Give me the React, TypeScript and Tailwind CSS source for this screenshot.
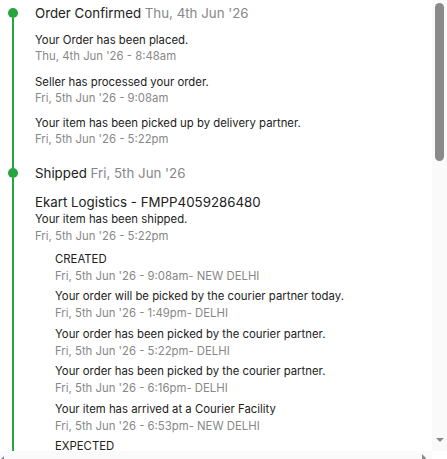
import React from "react";

type Update = { text: string; time: string };

interface Section {
    title: string;
    date: string;
    courier?: string;
    updates: Update[];
    tracking?: Update[];
}

const sections: Section[] = [
    {
        title: "Order Confirmed",
        date: "Thu, 4th Jun '26",
        updates: [
            { text: "Your Order has been placed.", time: "Thu, 4th Jun '26 - 8:48am" },
            { text: "Seller has processed your order.", time: "Fri, 5th Jun '26 - 9:08am" },
            { text: "Your item has been picked up by delivery partner.", time: "Fri, 5th Jun '26 - 5:22pm" },
        ],
    },
    {
        title: "Shipped",
        date: "Fri, 5th Jun '26",
        courier: "Ekart Logistics - FMPP4059286480",
        updates: [{ text: "Your item has been shipped.", time: "Fri, 5th Jun '26 - 5:22pm" }],
        tracking: [
            { text: "CREATED", time: "Fri, 5th Jun '26 - 9:08am- NEW DELHI" },
            { text: "Your order will be picked by the courier partner today.", time: "Fri, 5th Jun '26 - 1:49pm- DELHI" },
            { text: "Your order has been picked by the courier partner.", time: "Fri, 5th Jun '26 - 5:22pm- DELHI" },
            { text: "Your order has been picked by the courier partner.", time: "Fri, 5th Jun '26 - 6:16pm- DELHI" },
            { text: "Your item has arrived at a Courier Facility", time: "Fri, 5th Jun '26 - 6:53pm- NEW DELHI" },
            { text: "EXPECTED", time: "Fri, 5th Jun '26 - 7:10pm- NEW DELHI" },
        ],
    },
];

// chrome-like scrollbar, drawn since the headless shot hides the real one
function VScrollbar() {
    return (
        <div className="flex h-full w-[15px] shrink-0 flex-col items-center bg-[#fafafa]">
            <div className="mt-[3px] h-[158px] w-[9px] rounded-full bg-[#8a8a8a]" />
            <div className="flex-1" />
            <div className="mb-[9px] h-0 w-0 border-x-[4px] border-t-[4px] border-x-transparent border-t-[#8a8a8a]" />
        </div>
    );
}

function HScrollbar() {
    return (
        <div className="flex h-[15px] w-full shrink-0">
            <div className="flex flex-1 items-start bg-[#fafafa]">
                <div className="mt-[5px] h-0 w-0 border-y-[4px] border-r-[4px] border-y-transparent border-r-[#8a8a8a]" />
                <div className="flex-1" />
                <div className="mr-[6px] mt-[3px] h-0 w-0 border-y-[4px] border-l-[4px] border-y-transparent border-l-[#8a8a8a]" />
            </div>
            <div className="w-[15px] bg-white" />
        </div>
    );
}

function UpdateItem({ u, lh }: { u: Update; lh: string }) {
    return (
        <div className={`flex flex-col text-[11.35px] ${lh}`}>
            <span className="text-[#212121]">{u.text}</span>
            <span className="text-[#878787]">{u.time}</span>
        </div>
    );
}

function TimelineSection({ section, first }: { section: Section; first: boolean }) {
    return (
        <div className="flex">
            <div className="flex w-[26px] shrink-0 flex-col items-center">
                <div className={`h-[8px] w-[2px] ${first ? "bg-transparent" : "bg-[#26a541]"}`} />
                <div className="h-[10px] w-[10px] rounded-full bg-[#26a541]" />
                <div className="w-[2px] flex-1 bg-[#26a541]" />
            </div>
            <div className="ml-[9px] flex flex-col pb-[13px]">
                <div className="h-[26px] whitespace-nowrap text-[13.3px] leading-[26px] text-[#212121]">
                    {section.title} <span className="text-[#878787]">{section.date}</span>
                </div>
                {section.courier ? (
                    <>
                        <div className="mt-[7.5px] whitespace-nowrap text-[13.3px] leading-[17px] text-[#212121]">
                            {section.courier}
                        </div>
                        {section.updates.map((u, i) => (
                            <UpdateItem key={i} u={u} lh="leading-[17.5px]" />
                        ))}
                    </>
                ) : (
                    <div className="mt-[6px] flex flex-col gap-[9.5px]">
                        {section.updates.map((u, i) => (
                            <UpdateItem key={i} u={u} lh="leading-[16px]" />
                        ))}
                    </div>
                )}
                {section.tracking && (
                    <div className="ml-[20px] mt-[5px] flex flex-col gap-[3.6px]">
                        {section.tracking.map((t, i) => (
                            <UpdateItem key={i} u={t} lh="leading-[17px]" />
                        ))}
                    </div>
                )}
            </div>
        </div>
    );
}

export default function App() {
    return (
        <div className="flex h-[459px] w-[447px] flex-col overflow-hidden bg-white font-['Inter','Noto_Sans',sans-serif]">
            <div className="flex h-[451px] shrink-0">
                <div className="flex-1 overflow-hidden">
                    {sections.map((s, i) => (
                        <TimelineSection key={i} section={s} first={i === 0} />
                    ))}
                </div>
                <VScrollbar />
            </div>
            <HScrollbar />
        </div>
    );
}
